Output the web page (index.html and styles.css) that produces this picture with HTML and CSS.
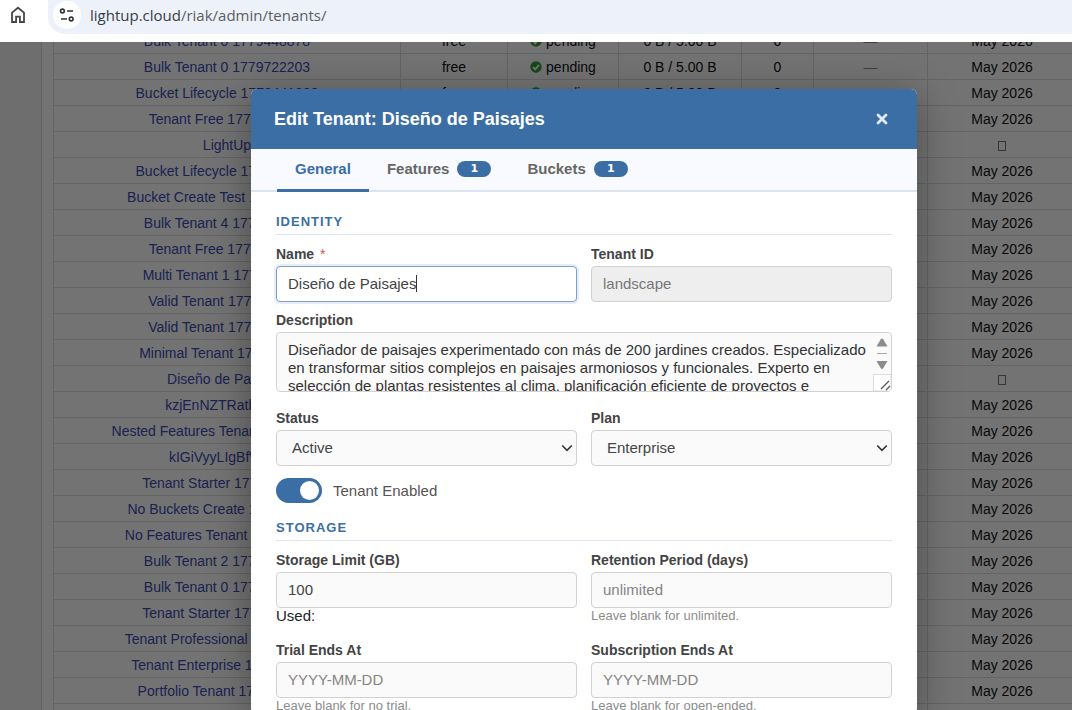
FILE: index.html
```html
<!DOCTYPE html>
<html lang="en">
<head>
<meta charset="utf-8">
<title>Tenants</title>
<link rel="stylesheet" href="styles.css">
</head>
<body>
<header class="browser-bar">
  <button class="home" type="button" aria-label="Home">
    <svg width="16" height="18" viewBox="0 0 16 18" fill="none" stroke="#45484b" stroke-width="1.8"><path d="M2 6.6 8 1.7l6 4.9V16H9.9v-5.4H6.1V16H2z"/></svg>
  </button>
  <div class="address">
    <button class="site-info" type="button" aria-label="Site information">
      <svg width="16" height="16" viewBox="0 0 16 16" fill="none" stroke="#333" stroke-width="1.6"><circle cx="3.4" cy="4" r="1.9"/><path d="M8 4h6M2 12h6"/><circle cx="12.2" cy="12" r="1.9"/></svg>
    </button>
    <span class="url"><span class="host">lightup.cloud</span>/riak/admin/tenants/</span>
  </div>
</header>
<main class="viewport">
  <div class="panel">
    <table class="tenants">
      <colgroup><col><col class="c-plan"><col class="c-status"><col class="c-usage"><col class="c-count"><col class="c-trial"><col class="c-date"></colgroup>
      <tbody id="rows"></tbody>
    </table>
  </div>
  <div class="overlay">
    <section class="modal" role="dialog" aria-labelledby="modal-title">
      <div class="modal-head">
        <h2 id="modal-title">Edit Tenant: Diseño de Paisajes</h2>
        <button class="close" type="button" aria-label="Close"><svg width="12" height="12" viewBox="0 0 12 12" stroke="#e3ebf4" stroke-width="2.8" stroke-linecap="round"><path d="M2 2l8 8M10 2l-8 8"/></svg></button>
      </div>
      <nav class="tabs">
        <button class="tab active" type="button">General</button>
        <button class="tab" type="button">Features <span class="badge">1</span></button>
        <button class="tab" type="button">Buckets <span class="badge">1</span></button>
      </nav>
      <form class="form">
        <h3>Identity</h3>
        <div class="grid">
          <div class="field">
            <label for="name">Name <span class="required">*</span></label>
            <div class="control"><input class="box focused" id="name" type="text" value="Diseño de Paisajes"><span class="caret"></span></div>
          </div>
          <div class="field">
            <label for="tid">Tenant ID</label>
            <input class="box" id="tid" type="text" value="landscape" disabled>
          </div>
        </div>
        <div class="field description">
          <label for="desc">Description</label>
          <div class="control">
            <textarea class="box" id="desc">Diseñador de paisajes experimentado con más de 200 jardines creados. Especializado en transformar sitios complejos en paisajes armoniosos y funcionales. Experto en selección de plantas resistentes al clima, planificación eficiente de proyectos e</textarea>
            <svg class="scroller" width="18" height="58" viewBox="0 0 18 58"><path d="M3.500 13.500 7.800 6.200q1.200-1.400 2.400 0l4.300 7.300z" fill="#8b8b8b"/><path d="M4 20.500h10" stroke="#a8a8a8"/><path d="M3.500 28h11l-4.300 7.300q-1.200 1.400-2.400 0z" fill="#8b8b8b"/><path d="M.5 58V41.500H18V58z" fill="#fff" stroke="#dcdcdc"/><path d="M8 56l8-8M13 57l4-4" stroke="#555" stroke-width="1.200"/></svg>
          </div>
        </div>
        <div class="grid">
          <div class="field"><label for="status">Status</label><div class="control"><select class="box" id="status"><option>Active</option></select><svg class="chevron" width="12" height="8" viewBox="0 0 12 8" fill="none" stroke="#333" stroke-width="1.600"><path d="M1.200 1.500 6 6.300l4.800-4.800"/></svg></div></div>
          <div class="field"><label for="plan">Plan</label><div class="control"><select class="box" id="plan"><option>Enterprise</option></select><svg class="chevron" width="12" height="8" viewBox="0 0 12 8" fill="none" stroke="#333" stroke-width="1.600"><path d="M1.200 1.500 6 6.300l4.800-4.800"/></svg></div></div>
        </div>
        <label class="switch"><input type="checkbox" checked>Tenant Enabled</label>
        <h3>Storage</h3>
        <div class="grid">
          <div class="field"><label for="limit">Storage Limit (GB)</label><input class="box" id="limit" type="text" value="100"><p class="used">Used:</p></div>
          <div class="field"><label for="retention">Retention Period (days)</label><input class="box" id="retention" type="text" placeholder="unlimited"><p class="hint">Leave blank for unlimited.</p></div>
        </div>
        <div class="grid dates">
          <div class="field"><label for="trial">Trial Ends At</label><input class="box" id="trial" type="text" placeholder="YYYY-MM-DD"><p class="hint">Leave blank for no trial.</p></div>
          <div class="field"><label for="sub">Subscription Ends At</label><input class="box" id="sub" type="text" placeholder="YYYY-MM-DD"><p class="hint">Leave blank for open-ended.</p></div>
        </div>
      </form>
    </section>
  </div>
</main>
<script src="tenants.js"></script>
</body>
</html>
```

FILE: styles.css
```css
* { box-sizing: border-box; }
body { margin: 0; height: 100vh; display: flex; flex-direction: column; overflow: hidden; background: #fff; font-family: "Liberation Sans", Arial, sans-serif; }
button { font: inherit; border: 0; padding: 0; background: none; }
h2, h3, p { margin: 0; }
svg { display: block; }

.browser-bar { flex: none; height: 42px; display: flex; align-items: flex-start; padding-left: 10px; gap: 22px; }
.home { margin-top: 6px; }
.address { flex: 1; height: 34px; padding: 0 0 4px 5px; display: flex; align-items: center; gap: 9px; background: #edf1fa; border-radius: 0 0 0 17px; }
.site-info { width: 28px; height: 28px; border-radius: 50%; background: #fff; display: grid; place-items: center; }
.url { font: 15px/24px "Open Sans", sans-serif; color: #5b5e62; }
.host { color: #3a3c3f; }

.viewport { flex: 1; min-height: 0; position: relative; overflow: hidden; background: #efefef; }
.panel { margin: -15px -16px 0 41px; padding: 0 11px; border-left: 1px solid #d6d6d6; background: #fafafa; }
.tenants { width: 100%; table-layout: fixed; border-collapse: collapse; background: #fafafa; font-size: 14px; text-align: center; color: #111; }
.tenants td { height: 26px; padding: 0; line-height: 20px; border: 1px solid #dadada; white-space: nowrap; }
.tenants a { color: #3c4bb0; text-decoration: none; }
.c-plan { width: 107px; }
.c-status { width: 111px; }
.c-usage { width: 123px; }
.c-count { width: 72px; }
.c-trial { width: 114px; }
.c-date { width: 149px; }
.ok { display: inline-block; vertical-align: -1px; margin-right: 4px; }
.tenants .dash { color: #888; }
.glyph { display: inline-block; width: 8px; height: 10px; border: 1px solid #777; vertical-align: middle; }

.overlay { position: absolute; inset: 0; padding: 47px 155px 0 251px; background: rgba(0, 0, 0, .54); }
.modal { background: #fff; border-radius: 6px; overflow: hidden; box-shadow: 0 8px 40px rgba(0, 0, 0, .35); }
.modal-head { height: 60px; padding: 0 29px 0 23px; display: flex; align-items: center; justify-content: space-between; background: #3b6ea5; color: #fff; }
.modal-head h2 { font-size: 18px; line-height: 24px; }
.tabs { height: 43px; padding-left: 26px; display: flex; background: #f8faff; border-bottom: 2px solid #dbe5f0; }
.tab { height: 43px; padding: 0 18px 4px; display: flex; align-items: center; gap: 8px; font-size: 15px; font-weight: bold; color: #666; }
.tab.active { color: #3b6ea5; border-bottom: 3px solid #3b6ea5; padding-bottom: 1px; }
.badge { width: 34px; border-radius: 8px; background: #3b6ea5; color: #fff; font: bold 11px/16px "DejaVu Sans", sans-serif; }

.form { padding: 22px 25px 0 25px; }
.form h3 { margin-bottom: 10px; padding-bottom: 4px; border-bottom: 1px solid #dfe7f0; font-size: 13px; line-height: 16px; letter-spacing: 1px; text-transform: uppercase; color: #3b6ea5; }
.grid { display: grid; grid-template-columns: 1fr 1fr; gap: 14px; }
.field label { display: block; margin-bottom: 3px; font-size: 14px; line-height: 18px; font-weight: bold; color: #444; }
.required { margin-left: 2px; color: #d9534f; font-weight: normal; }
.control { position: relative; }
.box { display: block; width: 100%; height: 36px; padding: 0 11px 2px; border: 1px solid #d2d2d2; border-radius: 4px; background: #fafafa; color: #444; font: 15px/18px "Liberation Sans", Arial, sans-serif; outline: none; }
.box::placeholder { color: #858585; }
.box:disabled { background: #eee; color: #777; }
.box.focused { background: #fff; border-color: #7f9fca; box-shadow: 0 0 0 2px #e6edf6; }
.caret { position: absolute; left: 140px; top: 9px; width: 1px; height: 17px; background: #333; }
.description { margin: 9px 0 17px; }
textarea.box { height: 60px; padding: 8px 24px 0 11px; resize: none; overflow: hidden; color: #333; }
select.box { appearance: none; padding: 0 26px 0 15px; }
.chevron { position: absolute; right: 4px; top: 14px; pointer-events: none; }
.scroller { position: absolute; right: 1px; top: 1px; }
.switch { margin: 12px 0 17px; display: flex; align-items: center; gap: 11px; font-size: 15px; line-height: 25px; color: #555; }
.switch input { appearance: none; margin: 0; width: 46px; height: 25px; padding: 3px; border-radius: 13px; background: #3b6ea5; display: flex; justify-content: flex-end; align-items: center; }
.switch input::before { content: ""; width: 19px; height: 19px; border-radius: 50%; background: #fff; }
.used { font-size: 15px; line-height: 16px; color: #222; }
.hint { font-size: 13px; line-height: 16px; color: #8c8c8c; }
.dates { margin-top: 17px; }
```

FILE: tenants.js
```js
const names = [
  "Bulk Tenant 0 1779448878", "Bulk Tenant 0 1779722203", "Bucket Lifecycle 1779441329",
  "Tenant Free 1779722203", "LightUp", "Bucket Lifecycle 1779722203",
  "Bucket Create Test 1779722203", "Bulk Tenant 4 1779722203", "Tenant Free 1779448878",
  "Multi Tenant 1 1779722203", "Valid Tenant 1779722203", "Valid Tenant 1779448878",
  "Minimal Tenant 1779722203", "Diseño de Paisajes", "kzjEnNZTRatbLwas",
  "Nested Features Tenant 1779722203", "kIGiVyyLIgBfWqas", "Tenant Starter 1779722203",
  "No Buckets Create 1779722203", "No Features Tenant 1779722203", "Bulk Tenant 2 1779722203",
  "Bulk Tenant 0 1779441329", "Tenant Starter 1779448878", "Tenant Professional 1779722203",
  "Tenant Enterprise 1779722203", "Portfolio Tenant 1779722203", "Bulk Tenant 3 1779722203"
];
const check = '<svg class="ok" width="12" height="12" viewBox="0 0 12 12"><circle cx="6" cy="6" r="5.7" fill="#359b35"/><path d="M3 6l2.200 2.300L9 3.800" fill="none" stroke="#fff" stroke-width="1.800"/></svg>';
document.getElementById("rows").innerHTML = names.map(name => {
  const date = name === "LightUp" || name === "Diseño de Paisajes" ? '<span class="glyph"></span>' : "May 2026";
  return `<tr><td><a href="#">${name}</a></td><td>free</td><td>${check}pending</td><td>0 B / 5.00 B</td><td>0</td><td class="dash">—</td><td>${date}</td></tr>`;
}).join("");
```
